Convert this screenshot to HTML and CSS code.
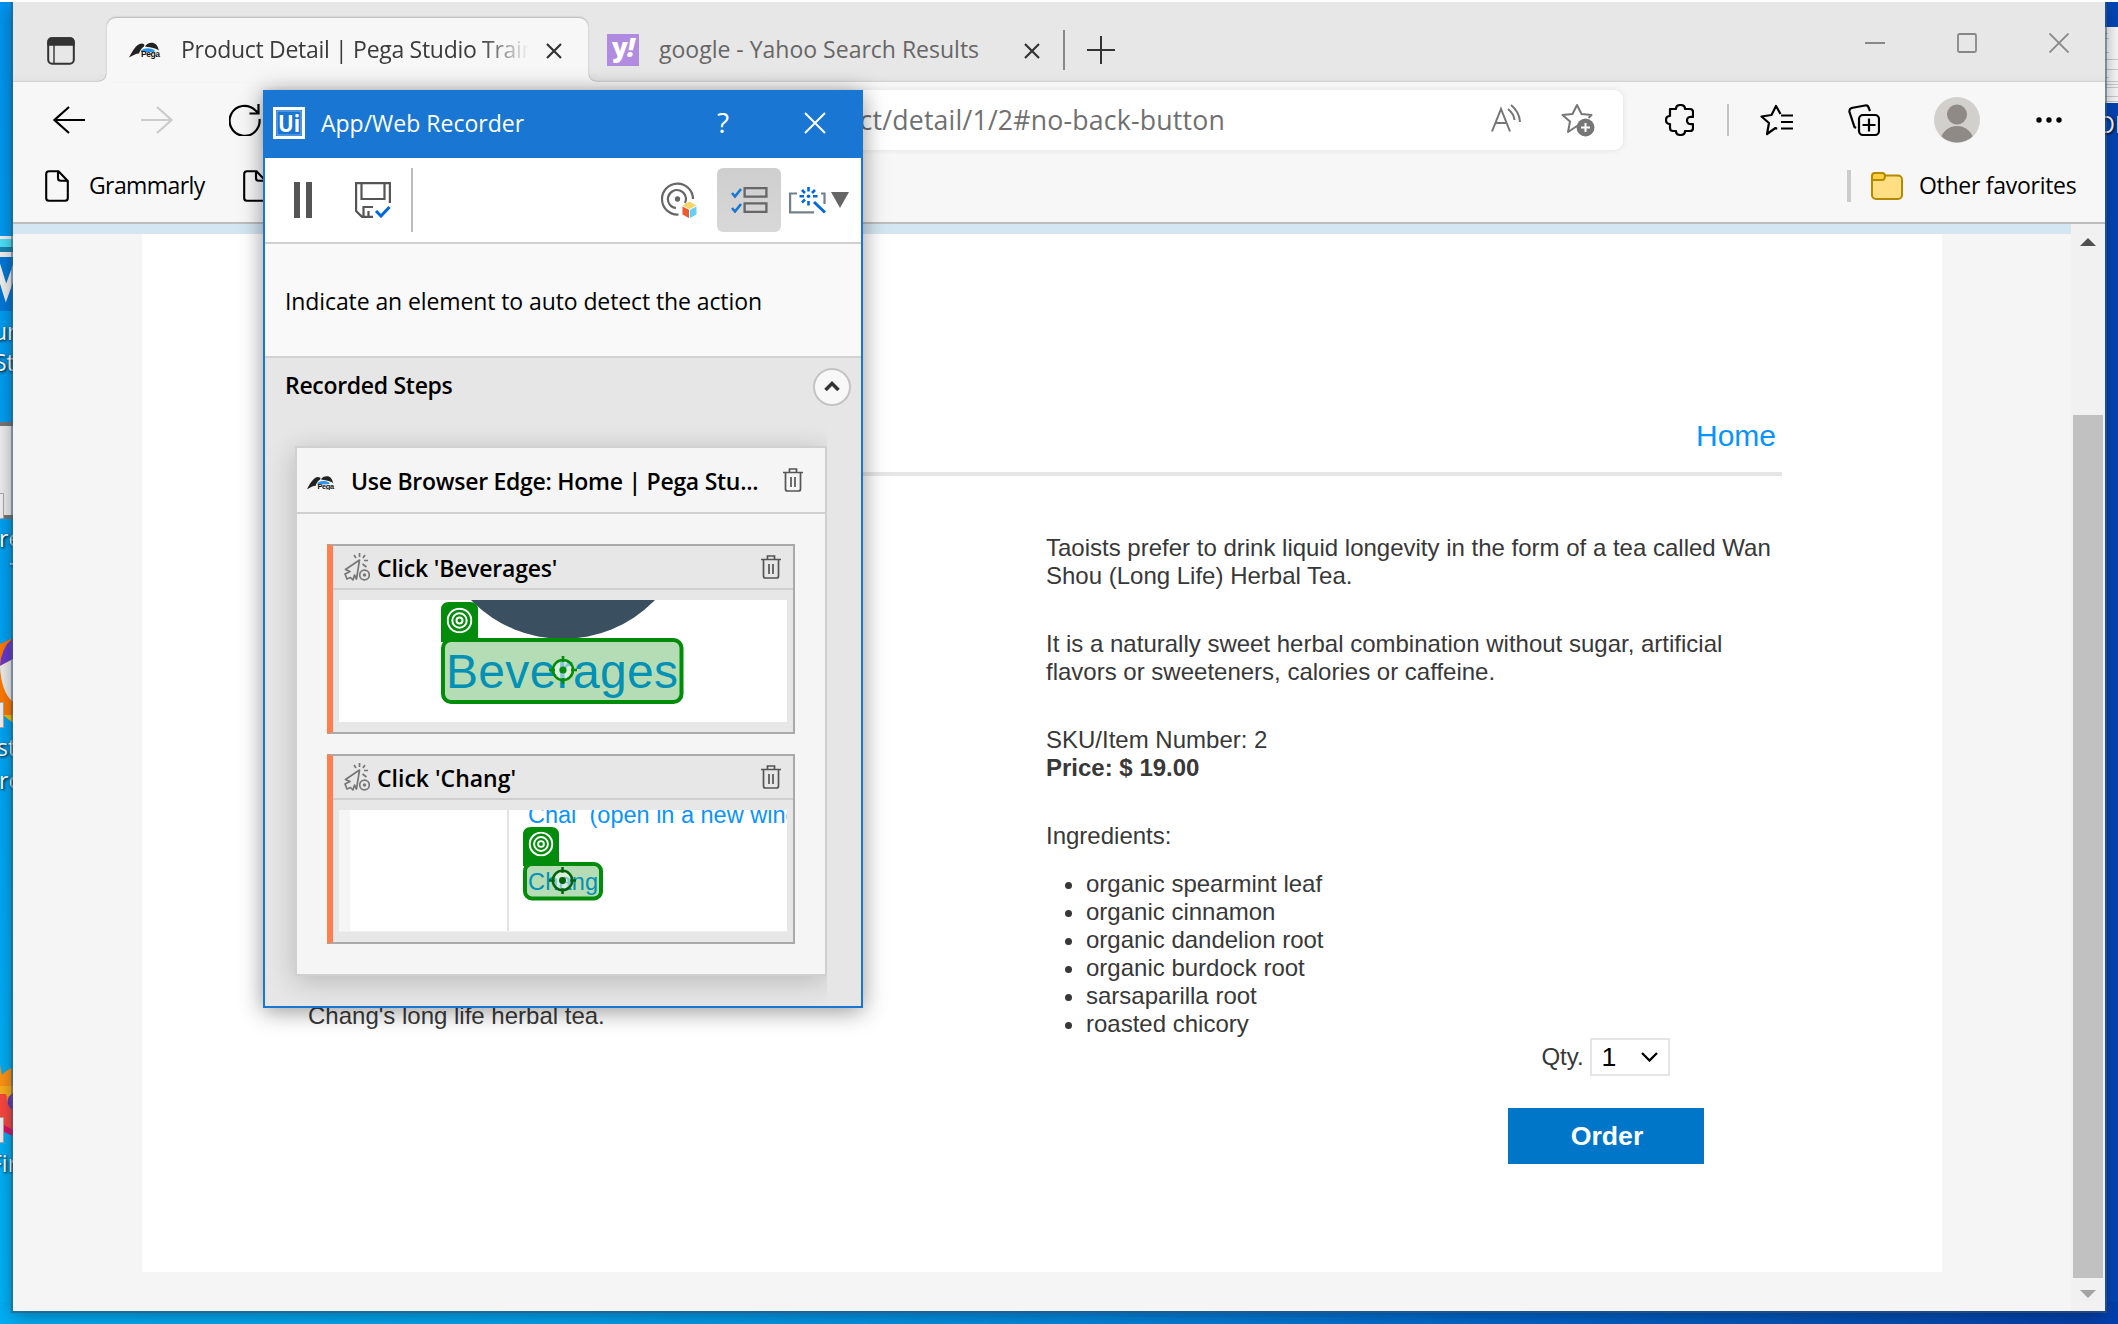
FILE: index.html
```html
<!DOCTYPE html>
<html lang="en">
<head>
<meta charset="utf-8">
<title>Product Detail | Pega Studio Training</title>
<link rel="stylesheet" href="styles.css">
</head>
<body>
<svg class="defs" width="0" height="0">
  <defs>
    <symbol id="pega" viewBox="0 0 32 16">
      <path d="M0 15C3 9 7 2 12 1c3 0 4 1 3 3-3 2-4 4-5 7-3 0-6 2-10 4z" fill="#222"/>
      <path d="M16 4c2-4 8-5 11-2 3 3 2 6 4 7-3-3-8-4-15-5z" fill="#222"/>
      <path d="M12 8c4-3 9-3 14 0l-1 1.500H12z" fill="#2a94ee"/>
      <text x="12" y="14.500" font-size="8.500" font-weight="700" font-family="Liberation Sans" fill="#111" textLength="19">Pega</text>
    </symbol>
    <symbol id="trash" viewBox="0 0 20 24">
      <g fill="none" stroke="#555" stroke-width="1.700"><path d="M0 4.500h20M6.500 4V1h7v3M2.500 5v16q0 2 2 2h11q2 0 2-2V5M8 9v10M12 9v10"/></g>
    </symbol>
    <symbol id="click" viewBox="0 0 26 28">
      <g fill="none" stroke="#777" stroke-width="1.700">
        <path d="M15.500 7 1.500 16.500l4.500 2-5 2.500L3 26l3.500-1.500L9 27l1.500-5 2 4z" stroke-linejoin="round"/>
        <path d="M10 2l2 3M15.500 0v4M21 2l-2 3M20 7.500h4M18.500 11l4 3"/>
        <circle cx="20.500" cy="22" r="4.800"/>
      </g>
      <circle cx="20.500" cy="22" r="1.700" fill="#777"/>
    </symbol>
    <symbol id="page" viewBox="0 0 24 32">
      <path d="M1.200 4q0-2.800 2.800-2.800h9.500L22.800 11v17q0 2.800-2.800 2.800H4q-2.800 0-2.800-2.800zM13 1.500V8q0 2.800 2.800 2.800h6.700" fill="none" stroke="#000" stroke-width="2.100"/>
    </symbol>
    <symbol id="rings" viewBox="0 0 26 26">
      <g fill="none" stroke="#fff" stroke-width="2"><circle cx="13" cy="13" r="11.800"/><circle cx="13" cy="13" r="7.200"/></g>
      <circle cx="13" cy="13" r="3" fill="none" stroke="#fff" stroke-width="2"/>
    </symbol>
    <symbol id="aim" viewBox="0 0 28 28">
      <circle cx="14" cy="14" r="10" fill="#fff" fill-opacity=".5" stroke="currentColor" stroke-width="2.600"/>
      <circle cx="14" cy="14" r="3.600" fill="currentColor"/>
      <path d="M14 0v6M14 22v6M0 14h6M22 14h6" stroke="currentColor" stroke-width="2.600"/>
    </symbol>
  </defs>
</svg>

<main class="desktop">
  <div class="shortcuts">
    <svg class="tile tile-studio" viewBox="0 0 13 75" preserveAspectRatio="none"><path fill="#f2f2f2" d="M0 0h13v3H0zM0 16h13v5H0z"/><path fill="#4de1f9" d="M0 3h13v8H0z"/><path fill="#1985b0" d="M0 11h13v5H0z"/><path fill="#0078d7" d="M0 21h13v54H0z"/><path d="M-3 28 6 57l10-28" fill="none" stroke="#f2f2f2" stroke-width="6"/></svg>
    <span class="label label-ur">ur</span>
    <span class="label label-st">St</span>
    <svg class="tile tile-doc" viewBox="0 0 13 97"><path fill="#777" d="M0 0h13v97H0z"/><path fill="#eee" d="M0 4h13v89H0z"/><path fill="#f2f2f2" stroke="#aaa" d="M-1 71.500h4.500v25H-1z"/></svg>
    <span class="label label-re">re</span>
    <span class="label label-t">T</span>
    <svg class="tile tile-browser" viewBox="0 0 13 90"><path fill="#ff7a00" d="M13 0 0 6v71h13z"/><path fill="#6a3bd1" d="M13 0Q1 10 0 28l13-7z"/><path fill="#eee" d="M13 21 0 28q1 26 13 36z"/><path fill="#f5c400" d="M3 77h10v8z"/><path fill="#f2f2f2" stroke="#aaa" d="M-1 64.500h4.500v25H-1z"/></svg>
    <span class="label label-st2">st</span>
    <span class="label label-ro">ro</span>
    <svg class="tile tile-fox" viewBox="0 0 13 79"><path fill="#ff9415" d="M0 0 2 10q4-5 10-7l1 40H0z"/><path fill="#fbb01e" d="M0 21h13v10H0z"/><path fill="#fb4740" d="M0 29h6q1 12 7 16v22L0 60z"/><path fill="#6a3bb5" d="M13 28q-9 6-3 15l3 2z"/><path fill="#e0116b" d="m4 60 9 5v6l-9-4z"/><path fill="#f2f2f2" stroke="#aaa" d="M-1 52.500h4.500v25H-1z"/></svg>
    <span class="label label-fi">Fir</span>
    <svg class="tile tile-window" viewBox="0 0 13 77"><path fill="#fafafa" d="M0 0h13v76H0z"/><path stroke="#ccc" d="M0 6.500h3M0 11.500h4M0 25.500h4M0 32.500h13M0 42.500h13M0 50.500h4M0 54.500h13M0 57.500h13M0 60.500h13M0 69.500h13M0 74.500h13"/></svg>
    <span class="label label-ol">OL</span>
  </div>

  <section class="browser">
    <header class="tabs">
      <svg class="workspaces" viewBox="0 0 28 28"><rect x="1.200" y="1.200" width="25.600" height="25.600" rx="4" fill="none" stroke="#333" stroke-width="2"/><path d="M1 8V5q0-4 4-4h18q4 0 4 4v3zM7 8v19" fill="#333" stroke="#333" stroke-width="1.400"/></svg>
      <div class="tab tab-active">
        <svg class="favicon"><use href="#pega"/></svg>
        <span class="tab-title">Product Detail | Pega Studio Training</span>
        <svg class="tab-close" viewBox="0 0 16 16"><path d="M1 1l14 14M15 1 1 15" stroke="#333" stroke-width="2.200"/></svg>
      </div>
      <div class="tab tab-idle">
        <span class="yahoo">y<i>!</i></span>
        <span class="tab-title">google - Yahoo Search Results</span>
        <svg class="tab-close" viewBox="0 0 16 16"><path d="M1 1l14 14M15 1 1 15" stroke="#333" stroke-width="2.200"/></svg>
      </div>
      <span class="tab-divider"></span>
      <svg class="new-tab" viewBox="0 0 28 28"><path d="M14 0v28M0 14h28" stroke="#333" stroke-width="2"/></svg>
      <div class="window-buttons">
        <svg viewBox="0 0 20 20"><path d="M0 10h20" stroke="#888" stroke-width="2"/></svg>
        <svg viewBox="0 0 20 20"><rect x="1" y="1" width="18" height="18" rx="1.500" fill="none" stroke="#888" stroke-width="1.800"/></svg>
        <svg viewBox="0 0 20 20"><path d="M.5.5l19 19M19.500.5l-19 19" stroke="#888" stroke-width="1.800"/></svg>
      </div>
    </header>

    <nav class="toolbar">
      <div class="nav-buttons">
        <svg width="32" height="28" viewBox="0 0 32 28"><path d="M32 14H1.500M16 1 1.500 14 16 27" fill="none" stroke="#000" stroke-width="2.200"/></svg>
        <svg width="32" height="28" viewBox="0 0 32 28"><path d="M0 14h30.500M16 1l14.500 13L16 27" fill="none" stroke="#ccc" stroke-width="2.200"/></svg>
        <svg width="32" height="32" viewBox="0 0 32 32"><path d="M30.500 15A15 15 0 1 1 26 6l4 3.500M29.500 0v9.500H20.500" fill="none" stroke="#000" stroke-width="2.200"/></svg>
      </div>
      <div class="address">
        <span class="url">product/detail/1/2#no-back-button</span>
        <svg class="read-aloud" viewBox="0 0 32 28"><g fill="none" stroke="#767676" stroke-width="2"><path d="M1 27.500 10 5l9 22.500M4.500 19h11M17 5q6 5 6.500 11M20 1q8.500 7 9 17"/></g></svg>
        <svg class="add-favorite" viewBox="0 0 34 34"><path d="M18 24l-2-1-9 6 2-10.500L1.500 12l10-1L16 2l4.500 9 10 1-3 3" fill="none" stroke="#767676" stroke-width="2" stroke-linejoin="round"/><circle cx="24.500" cy="24.500" r="9" fill="#767676"/><path d="M24.500 20v9M20 24.500h9" stroke="#fff" stroke-width="2"/></svg>
      </div>
      <div class="actions">
        <svg width="29" height="32" viewBox="0 0 29 32"><path d="M5 5h6q0-4 4.500-4T20 5h5q3 0 3 3v5q-6-1-6 3.500T28 20v4q0 3-3 3h-5q0 4-4.500 4T11 27H8q-3 0-3-3v-4q-4 0-4-4t4-4z" fill="none" stroke="#000" stroke-width="2.200" stroke-linejoin="round"/></svg>
        <span class="action-divider"></span>
        <svg class="favorites" width="33" height="32" viewBox="0 0 33 32"><path d="M17 25l-1.500-1L7 30l2-11L1.500 12.500l10-1.500L16 2l4.500 8M21 11.500h12M21 18h12M21 24.500h12" fill="none" stroke="#000" stroke-width="2.200" stroke-linejoin="round"/></svg>
        <svg class="collections" width="32" height="32" viewBox="0 0 32 32"><path d="M8 24 6.500 23 1.500 8Q1 5 3.500 4L17 1.500q3-.5 3.500 2L22 7" fill="none" stroke="#000" stroke-width="2.200"/><rect x="11" y="11" width="20" height="20" rx="4" fill="none" stroke="#000" stroke-width="2.200"/><path d="M21 14.500v13M14.500 21h13" stroke="#000" stroke-width="2.200"/></svg>
        <svg class="avatar" width="46" height="46" viewBox="0 0 46 46"><clipPath id="round"><circle cx="23" cy="23" r="22.500"/></clipPath><circle cx="23" cy="23" r="23" fill="#d2d0cc"/><g clip-path="url(#round)" fill="#8f8a86"><circle cx="23" cy="17.500" r="10"/><circle cx="23" cy="46" r="17"/></g></svg>
        <svg class="more" width="26" height="6" viewBox="0 0 26 6"><circle cx="3" cy="3" r="2.700"/><circle cx="13" cy="3" r="2.700"/><circle cx="23" cy="3" r="2.700"/></svg>
      </div>
    </nav>

    <nav class="bookmarks">
      <svg class="page-icon"><use href="#page"/></svg>
      <span class="bookmark">Grammarly</span>
      <svg class="page-icon"><use href="#page"/></svg>
      <span class="folder-divider"></span>
      <svg class="folder" viewBox="0 0 32 28"><rect x="1" y="3.500" width="30" height="23.500" rx="4" fill="#ffdf82" stroke="#b58900" stroke-width="2"/><path d="M1 8V4q0-3 3-3h7q3 0 3 3 0 4-3 4z" fill="#ffcf3f" stroke="#b58900" stroke-width="2"/></svg>
      <span class="folder-name">Other favorites</span>
    </nav>

    <div class="viewport">
      <div class="document">
        <div class="notice"></div>
        <article class="product">
          <header class="product-header"><a class="home">Home</a></header>
          <div class="product-body">
            <figure class="photo"><figcaption>Chang's long life herbal tea.</figcaption></figure>
            <div class="details">
              <p>Taoists prefer to drink liquid longevity in the form of a tea called Wan<br>Shou (Long Life) Herbal Tea.</p>
              <p>It is a naturally sweet herbal combination without sugar, artificial<br>flavors or sweeteners, calories or caffeine.</p>
              <p>SKU/Item Number: 2<br><b>Price: $ 19.00</b></p>
              <p class="ingredients">Ingredients:</p>
              <ul>
                <li>organic spearmint leaf</li>
                <li>organic cinnamon</li>
                <li>organic dandelion root</li>
                <li>organic burdock root</li>
                <li>sarsaparilla root</li>
                <li>roasted chicory</li>
              </ul>
              <div class="order">
                <div class="quantity">Qty.
                  <span class="select">1<svg viewBox="0 0 17 10"><path d="M1 1l7.500 7.500L16 1" fill="none" stroke="#000" stroke-width="2.300"/></svg></span>
                </div>
                <button class="order-button">Order</button>
              </div>
            </div>
          </div>
        </article>
      </div>
      <div class="scrollbar">
        <svg class="arrow" viewBox="0 0 16 8"><path d="M0 8 8 0l8 8z" fill="#505050"/></svg>
        <div class="thumb"></div>
        <svg class="arrow" viewBox="0 0 16 8"><path d="M0 0h16L8 8z" fill="#a3a3a3"/></svg>
      </div>
    </div>
  </section>

  <section class="recorder">
    <header class="rec-title">
      <svg class="ui-logo" viewBox="0 0 32 32"><path d="M0 0h32v32H0z" fill="#fff"/><path d="M3 3h26v26H3z" fill="#1976d2"/><path d="M4 4h24v24H4z" fill="none" stroke="#7fb2e6" stroke-width="1"/><text x="5" y="24.500" font-family="Open Sans" font-weight="700" font-size="24" fill="#fff" textLength="22" lengthAdjust="spacingAndGlyphs">Ui</text></svg>
      <h1>App/Web Recorder</h1>
      <span class="help">?</span>
      <svg class="rec-close" viewBox="0 0 22 22"><path d="M1 1l20 20M21 1 1 21" stroke="#fff" stroke-width="2"/></svg>
    </header>
    <div class="rec-tools">
      <svg width="18" height="36" viewBox="0 0 18 36"><path d="M0 0h6v36H0zM12 0h6v36h-6z" fill="#555"/></svg>
      <svg class="save" width="36" height="36" viewBox="0 0 36 36"><g fill="none" stroke="#555" stroke-width="2.200"><path d="M34.900 21V1.100H1.100v28L7 34.900h11M6.500 1v16h23V1M8.500 35V25H18M13.500 35v-6"/></g><path d="m21 29 5 5 8.500-9" fill="none" stroke="#0067df" stroke-width="3"/></svg>
      <span class="rec-divider"></span>
      <svg class="target" width="37" height="36" viewBox="0 0 37 36"><g fill="none" stroke="#666" stroke-width="2.200"><path d="M17.500 32.500A15.500 15.500 0 1 1 32 17M15 26A9 9 0 1 1 24 21"/></g><circle cx="16.500" cy="17" r="2.700" fill="#666"/><path d="m28.500 19.500 7 4-7 3.500-7-3.500z" fill="#f3d667"/><path d="m21.500 24.500 6.500 3.200V36l-6.500-3.500z" fill="#f0592b"/><path d="m35.500 24.500-6.500 3.200V36l6.500-3.500z" fill="#68cdf5"/></svg>
      <span class="toggle"><svg width="37" height="26" viewBox="0 0 37 26"><g fill="none"><path d="M13.600 1.100h21.800v8.600H13.600zM13.600 16.300h21.800v8.600H13.600z" stroke="#666" stroke-width="2.300"/><path d="m1 6 3 3.500L10 2M1 21l3 3.500L10 17" stroke="#1976d2" stroke-width="2.600"/></g></svg></span>
      <svg class="wand" width="37" height="27" viewBox="0 0 37 27"><path d="M8 6.500H1.100v18.900H25M32 6.500h3.500V17" fill="none" stroke="#73808c" stroke-width="2.200"/><path d="m25 15 11 10.500" stroke="#0067df" stroke-width="3"/><path d="M19.500 0v4.500M19.500 14v4.500M10.500 9.200h4.500M24 9.200h4.500M13 3l3 3M26 3l-3 3M13 15.500l3-3" stroke="#0067df" stroke-width="2.600"/><circle cx="19.500" cy="9.200" r="1.800" fill="#0067df"/></svg>
      <svg class="caret" width="18" height="16" viewBox="0 0 18 16"><path d="M0 0h18L9 16z" fill="#666"/></svg>
    </div>
    <p class="hint">Indicate an element to auto detect the action</p>
    <div class="steps-title">
      <h2>Recorded Steps</h2>
      <span class="collapse"><svg viewBox="0 0 16 10"><path d="m1.500 9 6.500-6.500L14.500 9" fill="none" stroke="#333" stroke-width="3.500"/></svg></span>
    </div>
    <div class="steps">
      <div class="card">
        <div class="card-title">
          <svg class="card-favicon"><use href="#pega"/></svg>
          <h3>Use Browser Edge: Home | Pega Stu...</h3>
          <svg class="trash"><use href="#trash"/></svg>
        </div>
        <div class="card-body">
          <div class="step">
            <div class="step-title">
              <svg class="click-icon"><use href="#click"/></svg>
              <h4 class="name-beverages">Click 'Beverages'</h4>
              <svg class="trash"><use href="#trash"/></svg>
            </div>
            <svg class="shot" viewBox="339 600 448 122">
              <circle cx="563" cy="511" r="128" fill="#3a5060"/>
              <path d="M441 642v-32q0-8 8-8h21q8 0 8 8v32z" fill="#038b0b"/>
              <rect x="443" y="640" width="238.500" height="62" rx="8" fill="#b5ddb5" stroke="#038b0b" stroke-width="4"/>
              <path d="M443 650v-12h20v3h-17z" fill="#038b0b"/>
              <text x="446" y="687.500" font-size="48" fill="#0390b5" textLength="232">Beverages</text>
              <use href="#rings" x="446.500" y="607.500" width="26" height="26"/>
              <use href="#aim" x="549" y="656" width="28" height="28" color="#038b0b"/>
            </svg>
          </div>
          <div class="step">
            <div class="step-title">
              <svg class="click-icon"><use href="#click"/></svg>
              <h4 class="name-chang">Click 'Chang'</h4>
              <svg class="trash"><use href="#trash"/></svg>
            </div>
            <svg class="shot" viewBox="339 810 448 122">
              <path d="M339 810h11v122h-11z" fill="#f5f5f5"/>
              <path d="M507 810h2v122h-2z" fill="#e3e3e3"/>
              <path d="M339 931h448v1H339z" fill="#f0f0f0"/>
              <text x="528" y="822.500" font-size="23.500" fill="#0a93ff">Chai</text>
              <text x="589.500" y="822.500" font-size="23.500" fill="#0a93ff">(open in a new window)</text>
              <path d="M523 866v-31q0-8 8-8h20q8 0 8 8v31z" fill="#038b0b"/>
              <rect x="525" y="864" width="76" height="34.500" rx="7" fill="#b5ddb5" stroke="#038b0b" stroke-width="4"/>
              <path d="M524 874v-10h20v2h-17v8z" fill="#038b0b"/>
              <text x="528" y="889.500" font-size="23.500" fill="#0390b5" textLength="70">Chang</text>
              <use href="#rings" x="528.500" y="831.500" width="25" height="25"/>
              <use href="#aim" x="549" y="867" width="27" height="27" color="#04630a"/>
            </svg>
          </div>
        </div>
      </div>
    </div>
  </section>
</main>
</body>
</html>
```
FILE: styles.css
```css
* { box-sizing: border-box; }
body { margin: 0; font-family: "Open Sans", sans-serif; font-size: 23px; color: #000; }
h1, h2, h3, h4, p, ul, figure { margin: 0; padding: 0; }
svg { display: block; flex: none; }
.defs { position: absolute; }

/* desktop */
.desktop {
  position: relative; width: 2118px; height: 1324px; overflow: hidden;
  border-top: 2px solid #fff;
  background:
    linear-gradient(#0446b8, #0446b8) right top / 60px 1300px no-repeat,
    linear-gradient(90deg, #00aef5 0, #00a5f0 500px, #0090e6 1000px, #0068cf 1500px, #0450b8 1900px, #0340b0 100%) 0 1300px / 100% 24px no-repeat,
    linear-gradient(#0095f0, #00b4f8);
}
.shortcuts > * { position: absolute; }
.tile { left: 0; width: 13px; }
.tile-studio { top: 234px; height: 75px; }
.tile-doc { top: 420px; height: 97px; }
.tile-browser { top: 636px; height: 90px; }
.tile-fox { top: 1063px; height: 79px; }
.tile-window { left: 2105px; top: 25px; height: 77px; }
.label { color: #fff; font-size: 23px; line-height: 30px; text-shadow: 1px 1px 3px #000; }
.label-ur { left: -7px; top: 314px; }
.label-st { left: -6px; top: 345px; }
.label-re { left: -1px; top: 521px; }
.label-t { left: 10px; top: 554px; }
.label-st2 { left: -3px; top: 730px; }
.label-ro { left: -1px; top: 763px; }
.label-fi { left: -10px; top: 1146px; }
.label-ol { left: 2097px; top: 107px; }

/* browser window */
.browser {
  position: absolute; left: 13px; top: 0; width: 2092px; height: 1309px;
  display: flex; flex-direction: column; background: #f7f7f7;
  box-shadow: 0 0 0 2px rgba(60, 90, 120, .55), 0 4px 18px rgba(0, 0, 0, .4);
}
.tabs {
  display: flex; align-items: center; height: 80px; padding-top: 16px; padding-left: 34px;
  background: linear-gradient(#e7e7e7 72px, #e3e3e3 78px, #cfcfcf 80px);
}
.workspaces { width: 28px; height: 28px; margin: 1px 32px 0 0; }
.tab { display: flex; align-items: center; height: 64px; padding-bottom: 3px; }
.tab-active {
  position: relative; width: 481px; padding-left: 22px; background: #f7f7f7;
  border-radius: 9px 9px 0 0; box-shadow: 0 -1px 2px rgba(0, 0, 0, .22);
}
.tab-active::before, .tab-active::after {
  content: ""; position: absolute; bottom: 0; width: 8px; height: 8px;
}
.tab-active::before { left: -8px; background: radial-gradient(circle at 0 0, #e3e3e3 6px, #c8c8c8 7px, #f7f7f7 8px); }
.tab-active::after { right: -8px; background: radial-gradient(circle at 100% 0, #e3e3e3 6px, #c8c8c8 7px, #f7f7f7 8px); }
.favicon { width: 32px; height: 17px; margin: 4px 20px 0 0; }
.tab-title { overflow: hidden; white-space: nowrap; color: #3b3b3b; line-height: 34px; margin-top: 1px; }
.tab-active .tab-title {
  width: 348px; letter-spacing: -.3px;
  mask-image: linear-gradient(90deg, #000 300px, transparent 348px);
}
.tab-close { width: 16px; height: 16px; margin-top: 4px; }
.tab-active .tab-close { margin-left: 17px; }
.tab-idle { padding-left: 19px; }
.tab-idle .tab-title { width: 342px; margin: 1px 0 0 20px; color: #666; }
.tab-idle .tab-close { margin-left: 23px; }
.yahoo {
  width: 32px; height: 32px; margin-top: 3px; background: #b18be0; color: #fff;
  font: 800 26px/26px "Open Sans", sans-serif; text-align: center; letter-spacing: -1px;
}
.tab-divider { width: 2px; height: 40px; margin: 0 22px 0 23px; background: #888; }
.new-tab { width: 28px; height: 28px; }
.window-buttons { display: flex; gap: 72px; margin: -15px 36px 0 auto; }
.window-buttons svg { width: 20px; height: 20px; }

.toolbar { display: flex; align-items: center; height: 76px; padding-left: 40px; }
.nav-buttons { display: flex; align-items: center; gap: 56px; width: 210px; }
.nav-buttons svg { margin-top: -1px; }
.address {
  display: flex; align-items: center; width: 1360px; height: 60px; background: #fff;
  border-radius: 0 9px 9px 0; box-shadow: 0 0 6px rgba(0, 0, 0, .09);
}
.url { width: 962px; text-align: right; font-size: 26.67px; line-height: 36px; letter-spacing: .2px; color: #707070; white-space: nowrap; }
.read-aloud { width: 32px; height: 28px; margin: -4px 0 0 266px; }
.add-favorite { width: 34px; height: 34px; margin-left: 38px; }
.actions { display: flex; align-items: center; margin-left: 42px; }
.action-divider { width: 2px; height: 32px; margin: 0 31px 0 33px; background: #c4c4c4; }
.collections { margin-left: 55px; }
.avatar { margin-left: 54px; }
.more { margin-left: 56px; }

.bookmarks { display: flex; align-items: center; height: 64px; padding: 0 28px 8px 32px; }
.page-icon { width: 24px; height: 32px; }
.bookmark { width: 154px; margin-left: 20px; letter-spacing: -.6px; margin-top: -2px; }
.folder-divider { width: 4px; height: 32px; margin-left: auto; background: #ccc; }
.folder { width: 32px; height: 28px; margin: 0 16px 0 20px; }
.folder-name { width: 158px; letter-spacing: -.28px; margin-top: -2px; white-space: nowrap; }

/* web page */
.viewport { display: flex; flex: 1; border-top: 2px solid #bdbdbd; background: #f5f5f5; }
.document { display: flex; flex-direction: column; width: 2058px; }
.notice { height: 10px; background: #d4e6f2; }
.product {
  width: 1800px; height: 1038px; margin-left: 129px; background: #fff;
  font-family: "Liberation Sans", Arial, sans-serif; font-size: 24px; line-height: 28px; color: #383838;
}
.product-header {
  display: flex; align-items: flex-end; justify-content: flex-end; height: 242px;
  margin: 0 160px; padding: 0 6px 18px 0; border-bottom: 4px solid #e6e6e6;
}
.home { font-size: 30px; line-height: 36px; color: #0a93ff; }
.product-body { display: grid; grid-template-columns: 738px 1fr; margin: 58px 0 0 166px; }
.photo { display: flex; align-items: flex-end; height: 496px; }
.details p { margin-bottom: 40px; white-space: nowrap; }
.details .ingredients { margin-bottom: 20px; }
.details ul { padding-left: 40px; }
.order { display: flex; flex-direction: column; gap: 32px; align-items: center; width: 196px; margin-left: 462px; }
.quantity { display: flex; align-items: center; gap: 6px; height: 38px; margin-left: -1px; }
.select {
  display: flex; align-items: center; justify-content: space-between; width: 80px; height: 38px;
  padding: 0 10px; border: 2px solid #e5e5e5; font-size: 26.67px; color: #000;
}
.select svg { width: 17px; height: 10px; }
.order-button {
  width: 196px; height: 56px; padding: 0 0 0 2px; border: 0; background: #0076c8; color: #fff;
  font: 700 26.67px "Liberation Sans", Arial, sans-serif;
}
.scrollbar { display: flex; flex-direction: column; align-items: center; width: 34px; padding: 14px 1px 13px 0; background: #f1f1f1; }
.arrow { width: 16px; height: 8px; }
.thumb { width: 30px; height: 863px; margin: auto 0 12px; background: #c1c1c1; }

/* recorder window */
.recorder {
  position: absolute; left: 263px; top: 88px; width: 600px; height: 918px;
  display: flex; flex-direction: column; border: 2px solid #1976d2; background: #e6e6e6;
  box-shadow: 0 3px 22px rgba(0, 0, 0, .42);
}
.rec-title { display: flex; align-items: center; height: 66px; padding: 0 35px 4px 8px; background: #1976d2; color: #fff; }
.ui-logo { width: 32px; height: 32px; }
.rec-title h1 { font: 400 23px/32px "Open Sans", sans-serif; margin: 0 auto 0 16px; }
.help { font-size: 28px; line-height: 32px; margin: -3px 75px 0 0; }
.rec-close { width: 22px; height: 22px; }
.rec-tools { display: flex; align-items: center; height: 86px; padding-left: 29px; background: #fff; border-bottom: 2px solid #d0d0d0; }
.save { margin-left: 43px; }
.rec-divider { width: 2px; height: 64px; margin-left: 20px; background: #bdbdbd; }
.target { margin-left: 248px; }
.toggle {
  display: flex; align-items: center; justify-content: center; width: 64px; height: 64px; margin-left: 19px;
  border-radius: 6px; background: linear-gradient(#cecece, #d8d8d8);
}
.wand { margin-left: 8px; }
.caret { margin-left: 5px; }
.hint { height: 114px; padding-left: 20px; line-height: 114px; letter-spacing: -.1px; background: #f9f9f9; border-bottom: 2px solid #d2d2d2; }
.steps-title { display: flex; align-items: center; justify-content: space-between; height: 58px; padding: 0 10px 0 20px; }
.steps-title h2, .card-title h3, .step-title h4 { font-size: 23px; font-weight: 600; line-height: 32px; white-space: nowrap; }
.steps-title h2 { letter-spacing: -.3px; margin-top: -4px; }
.collapse {
  display: flex; align-items: center; justify-content: center; width: 38px; height: 38px;
  border: 2px solid #c4c4c4; border-radius: 50%; background: #f8f8f8;
}
.collapse svg { width: 16px; height: 10px; margin-top: -3px; }
.steps { width: 562px; height: 590px; padding: 30px 0 0 30px; overflow: hidden; }
.card { width: 532px; height: 530px; background: #f5f5f5; border: 2px solid #d0d0d0; box-shadow: 0 5px 26px rgba(0, 0, 0, .2); }
.card-title { display: flex; align-items: center; height: 66px; padding: 0 22px 0 10px; border-bottom: 2px solid #d0d0d0; }
.card-favicon { width: 28px; height: 14px; margin: 5px 16px 0 0; }
.card-title h3 { letter-spacing: -.27px; margin-top: 2px; }
.trash { width: 20px; height: 24px; margin-left: auto; }
.card-body { display: flex; flex-direction: column; gap: 20px; padding: 30px; }
.step { height: 190px; background: #e7e7e7; border: 2px solid #aaa; border-left: 6px solid #ff7f50; }
.step-title { display: flex; align-items: center; height: 44px; padding: 0 12px 0 11px; border-bottom: 2px solid #cfcfcf; }
.step-title h4 { margin-top: 2px; }
.click-icon { width: 26px; height: 28px; margin-right: 7px; }
.name-beverages { letter-spacing: -.2px; }
.shot { width: 448px; height: 122px; margin: 10px 0 0 6px; background: #fff; font-family: "Liberation Sans", Arial, sans-serif; }
```
